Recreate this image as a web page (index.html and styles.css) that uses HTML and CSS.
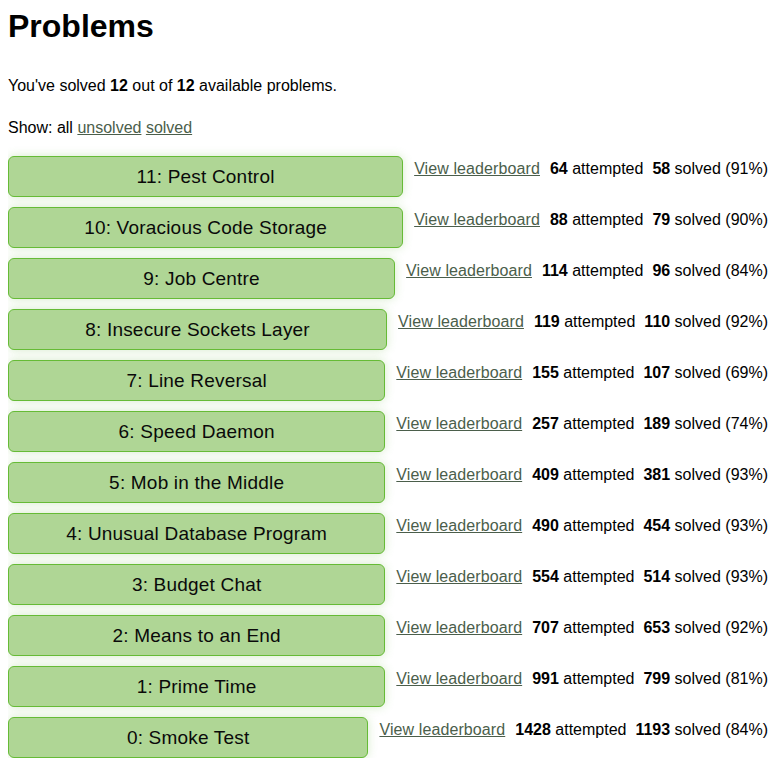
FILE: index.html
```html
<!DOCTYPE html>
<html>
<head>
<meta charset="utf-8">
<title>Problems</title>
<link rel="stylesheet" href="styles.css">
</head>
<body>
<h1 class="title">Problems</h1>
<p class="summary">You've solved <b>12</b> out of <b>12</b> available problems.</p>
<p class="filter">Show: all <a href="#">unsolved</a> <a href="#">solved</a></p>
<div class="list">
  <div class="row"><button class="prob">11: Pest Control</button><div class="stats"><a href="#">View leaderboard</a><span><b>64</b> attempted</span><span><b>58</b> solved (91%)</span></div></div>
  <div class="row"><button class="prob">10: Voracious Code Storage</button><div class="stats"><a href="#">View leaderboard</a><span><b>88</b> attempted</span><span><b>79</b> solved (90%)</span></div></div>
  <div class="row"><button class="prob">9: Job Centre</button><div class="stats"><a href="#">View leaderboard</a><span><b>114</b> attempted</span><span><b>96</b> solved (84%)</span></div></div>
  <div class="row"><button class="prob">8: Insecure Sockets Layer</button><div class="stats"><a href="#">View leaderboard</a><span><b>119</b> attempted</span><span><b>110</b> solved (92%)</span></div></div>
  <div class="row"><button class="prob">7: Line Reversal</button><div class="stats"><a href="#">View leaderboard</a><span><b>155</b> attempted</span><span><b>107</b> solved (69%)</span></div></div>
  <div class="row"><button class="prob">6: Speed Daemon</button><div class="stats"><a href="#">View leaderboard</a><span><b>257</b> attempted</span><span><b>189</b> solved (74%)</span></div></div>
  <div class="row"><button class="prob">5: Mob in the Middle</button><div class="stats"><a href="#">View leaderboard</a><span><b>409</b> attempted</span><span><b>381</b> solved (93%)</span></div></div>
  <div class="row"><button class="prob">4: Unusual Database Program</button><div class="stats"><a href="#">View leaderboard</a><span><b>490</b> attempted</span><span><b>454</b> solved (93%)</span></div></div>
  <div class="row"><button class="prob">3: Budget Chat</button><div class="stats"><a href="#">View leaderboard</a><span><b>554</b> attempted</span><span><b>514</b> solved (93%)</span></div></div>
  <div class="row"><button class="prob">2: Means to an End</button><div class="stats"><a href="#">View leaderboard</a><span><b>707</b> attempted</span><span><b>653</b> solved (92%)</span></div></div>
  <div class="row"><button class="prob">1: Prime Time</button><div class="stats"><a href="#">View leaderboard</a><span><b>991</b> attempted</span><span><b>799</b> solved (81%)</span></div></div>
  <div class="row"><button class="prob">0: Smoke Test</button><div class="stats"><a href="#">View leaderboard</a><span><b>1428</b> attempted</span><span><b>1193</b> solved (84%)</span></div></div>
</div>
</body>
</html>
```
FILE: styles.css
```css
html, body {
  background: #ffffff;
}
body {
  margin: 8px;
  font-family: "Liberation Sans", Arial, sans-serif;
  font-size: 16px;
  line-height: 24px;
  color: #000000;
}
.title {
  margin: 0;
  font-size: 32px;
  line-height: 37px;
  font-weight: bold;
}
.summary {
  margin: 29px 0 0 0;
}
.filter {
  margin: 18px 0 0 0;
}
a {
  color: #4b5e4b;
  text-decoration: underline;
}
.list {
  margin-top: 16px;
  display: flex;
  flex-direction: column;
  gap: 10px;
}
.row {
  display: flex;
  align-items: flex-start;
}
.prob {
  flex: 1 1 auto;
  height: 41px;
  margin: 0 6px 0 0;
  padding: 0;
  border: 1px solid #66bb36;
  border-radius: 6px;
  background: #afd695;
  box-shadow: 0 0 10px rgba(120, 190, 80, 0.3);
  font-family: "Liberation Sans", Arial, sans-serif;
  font-size: 19px;
  letter-spacing: 0.2px;
  color: #0a0a0a;
  text-align: center;
  cursor: pointer;
}
.stats {
  flex: 0 0 auto;
  display: flex;
  white-space: nowrap;
  padding-top: 1px;
}
.stats > * {
  margin: 0 5px;
}
.stats a {
  letter-spacing: 0.1px;
}
.stats > span:last-child {
  margin-left: 4px;
}
```
